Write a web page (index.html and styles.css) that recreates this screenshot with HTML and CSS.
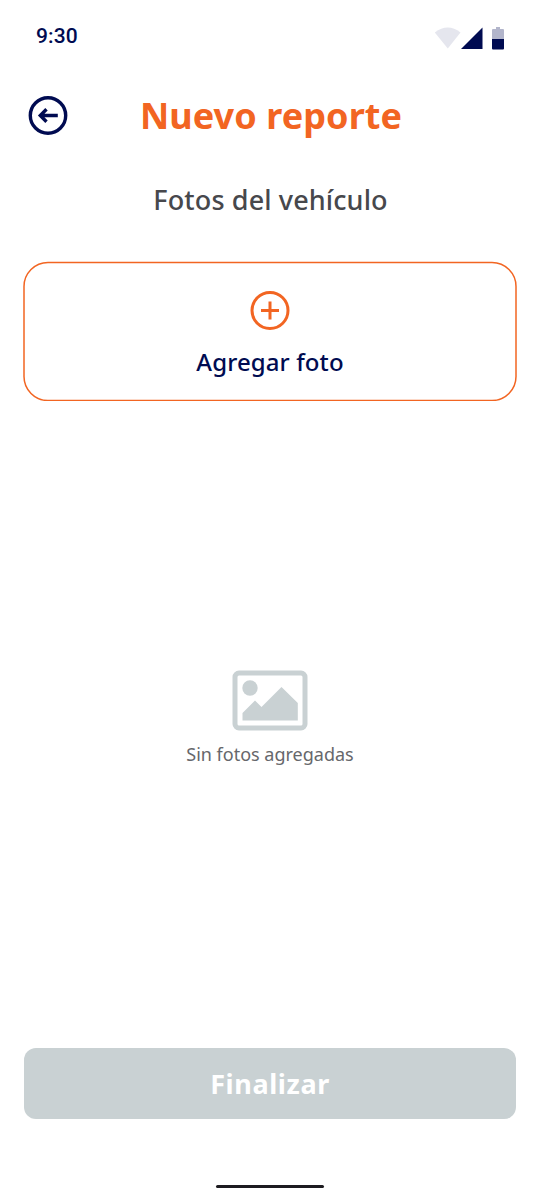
FILE: index.html
```html
<!DOCTYPE html>
<html lang="es">
<head>
<meta charset="utf-8">
<title>Nuevo reporte</title>
<link rel="stylesheet" href="styles.css">
</head>
<body>
<main class="screen">
  <div class="status">
    <span class="clock">9:30</span>
    <svg class="status-icons" width="71" height="24" viewBox="434 26 71 24">
      <path fill="#e5e6ee" d="M434.800 32.500Q447.800 22.500 460.500 32.500L447.800 48.500Z"/>
      <path fill="#000b51" d="M461 49L482.500 27.500V49Z"/>
      <path fill="#b2b5cb" d="M492 39V30Q492 29 493 29H496V27H500V29H503Q504 29 504 30V39Z"/>
      <path fill="#000b51" d="M492 39H504V48.500Q504 49.500 503 49.500H493Q492 49.500 492 48.500Z"/>
    </svg>
  </div>
  <header class="header">
    <button class="back" aria-label="Volver">
      <svg width="40" height="40" viewBox="28 96 40 40" fill="none" stroke="#000b51" stroke-width="3.400">
        <circle cx="48" cy="115.500" r="17.700"/>
        <path d="M57.800 115.500H40.500M46.500 109.300L40.300 115.500L46.500 121.700"/>
      </svg>
    </button>
    <h1 class="title">Nuevo reporte</h1>
  </header>
  <h2 class="subtitle">Fotos del vehículo</h2>
  <div class="add-wrap">
    <svg class="outline" width="494" height="140" viewBox="0 0 494 140" fill="none" stroke="#f26522" stroke-width="1.500">
      <rect x="1" y="1.500" width="492" height="138" rx="24"/>
    </svg>
    <button class="add">
      <svg width="40" height="40" viewBox="250 290 40 40" fill="none" stroke="#f26522" stroke-width="3">
        <circle cx="270" cy="310.500" r="18"/>
        <path d="M261 310.500H279M270 301.500V319.500"/>
      </svg>
      <span class="add-label">Agregar foto</span>
    </button>
  </div>
  <section class="empty">
    <svg width="76" height="62" viewBox="232 670 76 62">
      <rect x="235" y="673" width="70" height="55" rx="4" fill="none" stroke="#c9d1d3" stroke-width="5"/>
      <circle cx="250" cy="688" r="7.700" fill="#c9d1d3"/>
      <path fill="#c9d1d3" d="M242.500 720.500V713L255 700.500L261.500 707L281.500 687L297.800 703V720.500Z"/>
    </svg>
    <p class="empty-label">Sin fotos agregadas</p>
  </section>
  <button class="finish">Finalizar</button>
  <div class="home-bar"></div>
</main>
</body>
</html>
```

FILE: styles.css
```css
* { box-sizing: border-box; }
body { margin: 0; background: #fff; font-family: "Noto Sans", sans-serif; }
button { border: 0; padding: 0; background: none; font-family: inherit; }
svg { display: block; flex: none; }
.screen { width: 540px; height: 1200px; display: flex; flex-direction: column; padding: 0 24px; }
.status { height: 76px; padding: 0 11px 0 12px; display: flex; align-items: center; justify-content: space-between; }
.clock { font: 500 21px/24px Roboto, sans-serif; letter-spacing: 0.100px; color: #000b51; margin-top: -4px; }
.header { height: 80px; display: grid; grid-template-columns: 48px 1fr 48px; align-items: center; }
.back { padding-left: 4px; }
.title { margin: 0; padding-left: 2px; font-size: 36px; line-height: 48px; letter-spacing: 0.080px; font-weight: 700; color: #f26522; text-align: center; white-space: nowrap; }
.subtitle { margin: 26px 0 0; padding-left: 1px; font-size: 27px; line-height: 36px; letter-spacing: 0.120px; font-weight: 500; color: #47484c; text-align: center; }
.add-wrap { position: relative; margin-top: 44px; height: 139px; }
.outline { position: absolute; left: -1px; top: -1px; }
.add { width: 100%; display: flex; flex-direction: column; align-items: center; padding-top: 28px; }
.add-label { margin-top: 15px; font-size: 24px; line-height: 33px; letter-spacing: 0.100px; font-weight: 500; color: #000b51; }
.empty { flex: 1; padding-top: 269px; display: flex; flex-direction: column; align-items: center; }
.empty-label { margin: 10px 0 0; font-size: 18px; line-height: 24px; color: #66676b; }
.finish { height: 71px; border-radius: 12px; background: #c9d1d3; color: #fff; font-size: 27px; line-height: 36px; letter-spacing: 0.600px; font-weight: 700; }
.home-bar { width: 108px; height: 3px; border-radius: 2px; background: #1d1b20; align-self: center; margin: 66px 0 12px; }
```
